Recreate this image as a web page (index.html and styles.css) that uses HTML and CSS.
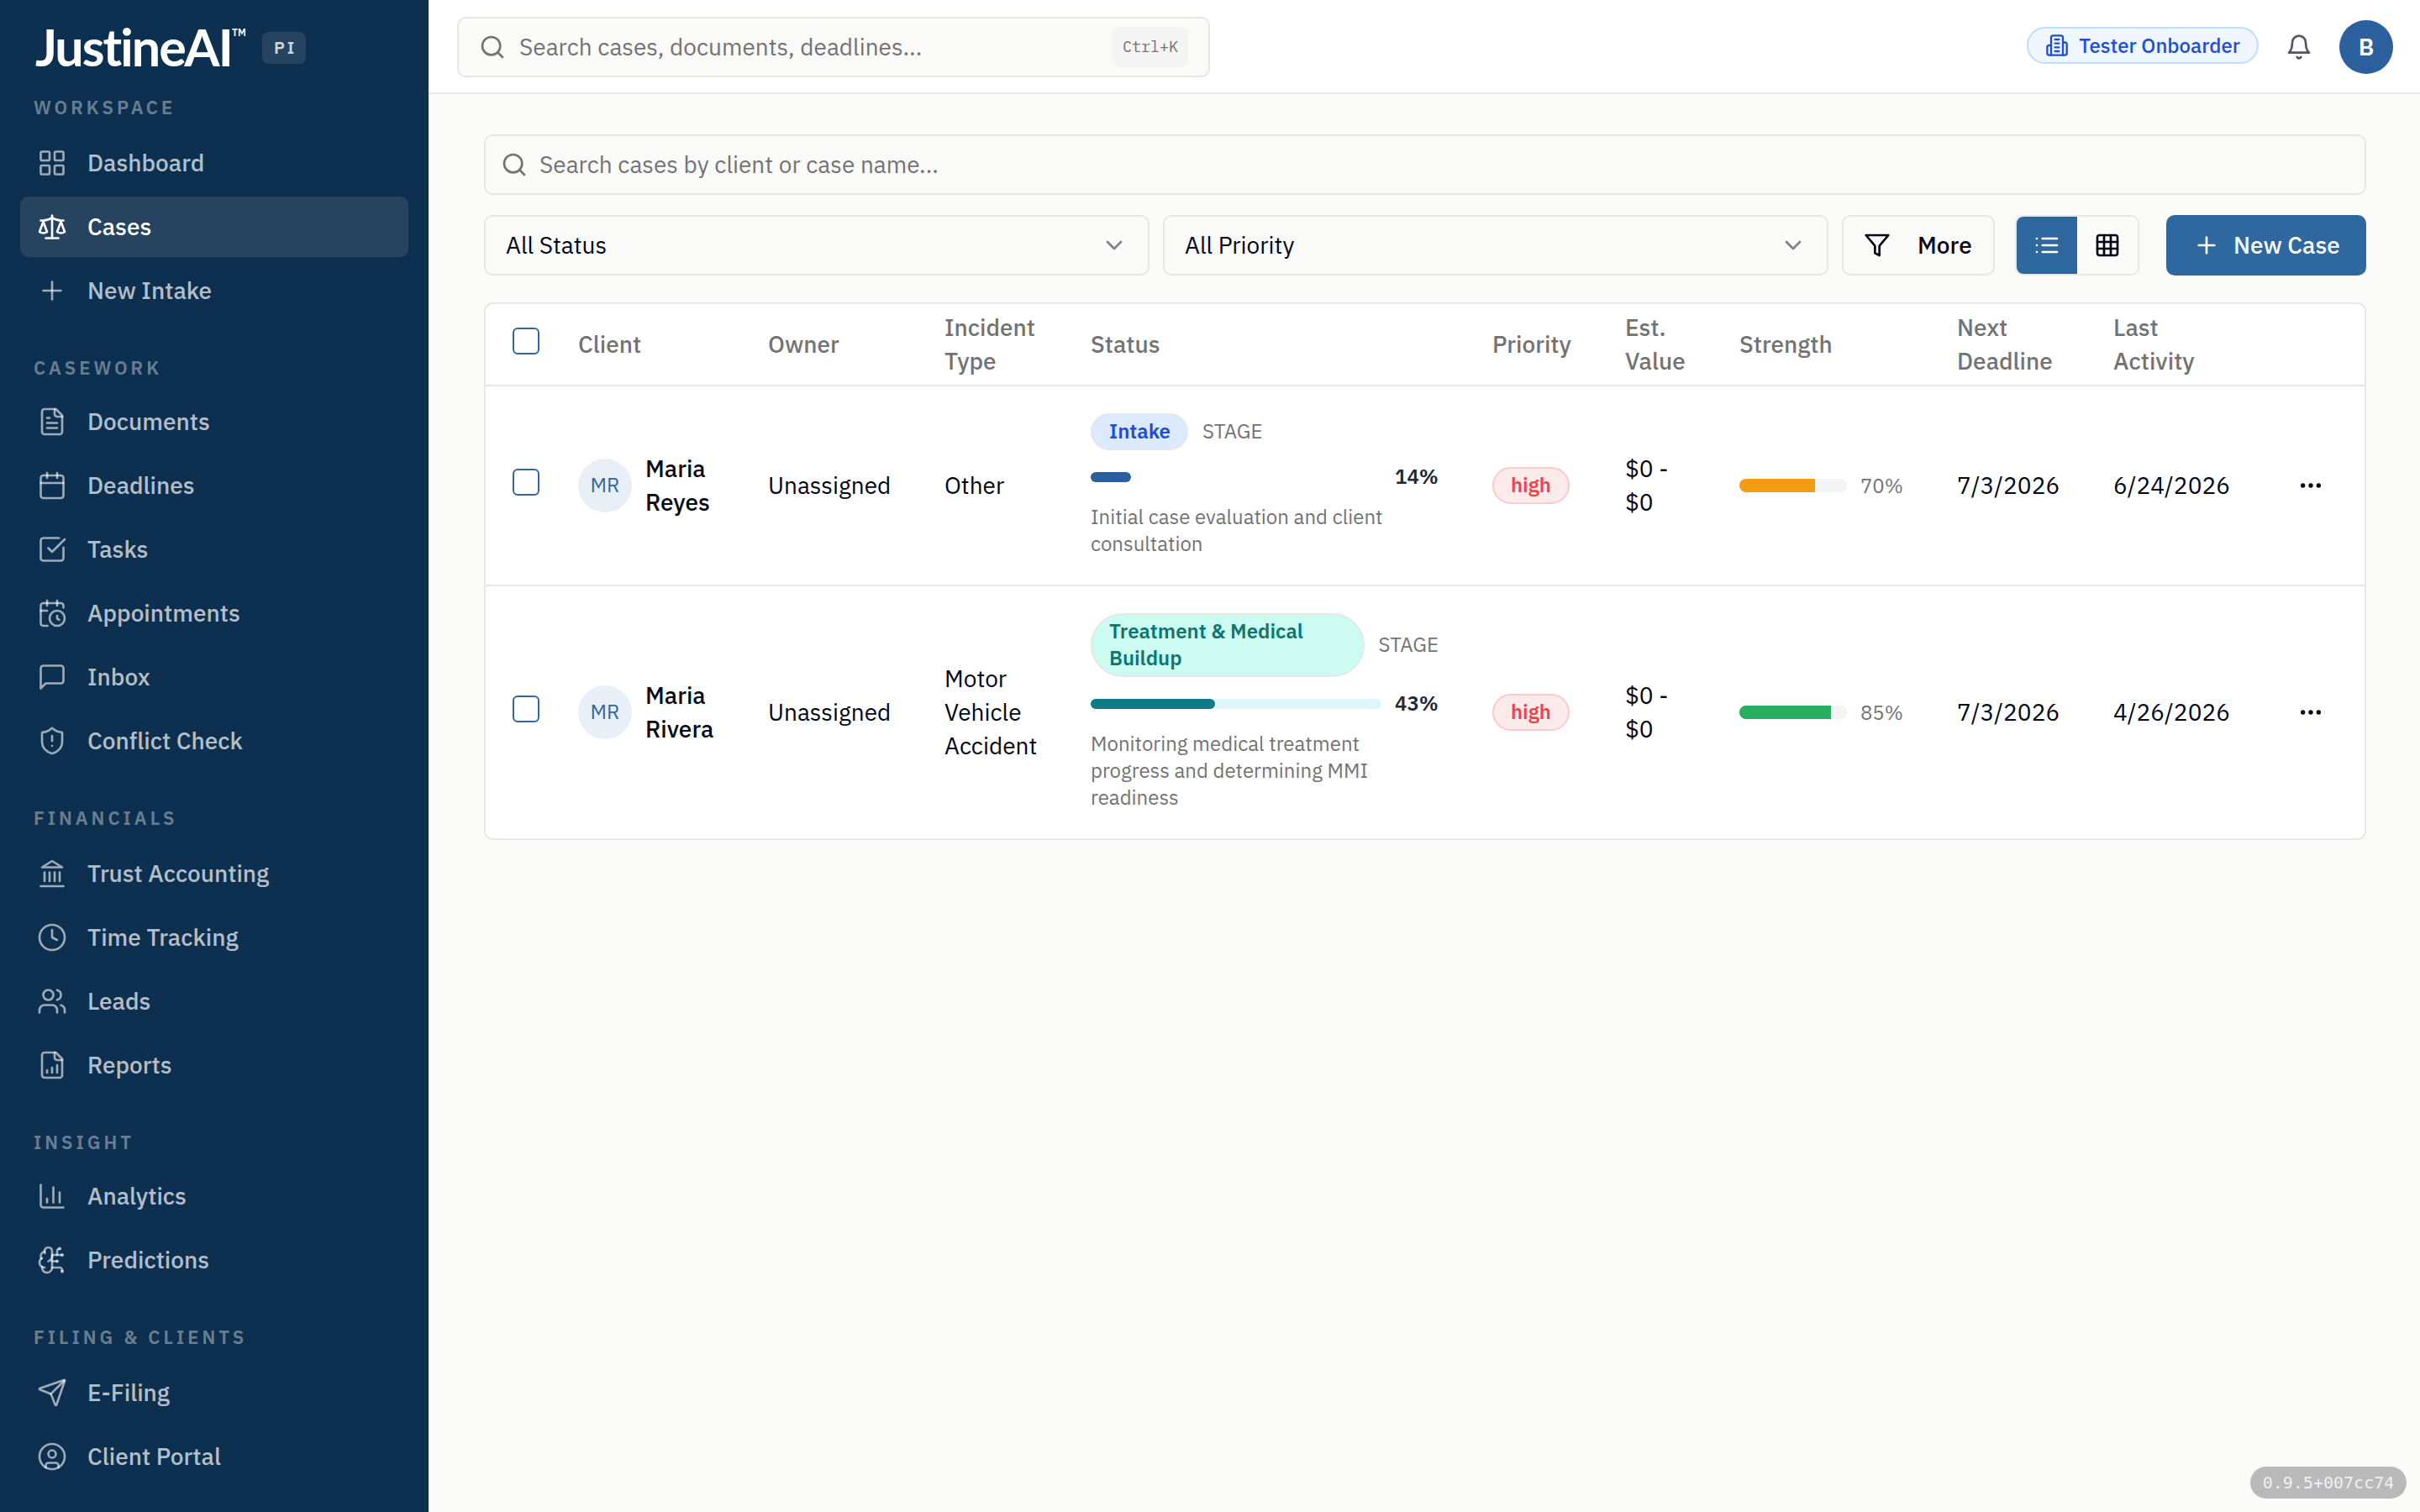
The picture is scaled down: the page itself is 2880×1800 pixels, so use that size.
FILE: index.html
```html
<!DOCTYPE html>
<html lang="en">
<head>
  <meta charset="UTF-8">
  <meta name="viewport" content="width=device-width, initial-scale=1.0">
  <title>Cases - JustineAI</title>
  <link rel="stylesheet" href="styles.css">
</head>
<body>
<svg class="sprite" xmlns="http://www.w3.org/2000/svg">
  <symbol id="i-dashboard" viewBox="0 0 24 24"><rect x="3" y="3" width="7" height="7" rx="1"/><rect x="14" y="3" width="7" height="7" rx="1"/><rect x="14" y="14" width="7" height="7" rx="1"/><rect x="3" y="14" width="7" height="7" rx="1"/></symbol>
  <symbol id="i-scale" viewBox="0 0 24 24"><path d="m16 16 3-8 3 8c-.87.65-1.92 1-3 1s-2.13-.35-3-1Z"/><path d="m2 16 3-8 3 8c-.87.65-1.92 1-3 1s-2.13-.35-3-1Z"/><path d="M7 21h10"/><path d="M12 3v18"/><path d="M3 7h2c2 0 5-1 7-2 2 1 5 2 7 2h2"/></symbol>
  <symbol id="i-plus" viewBox="0 0 24 24"><path d="M5 12h14"/><path d="M12 5v14"/></symbol>
  <symbol id="i-file" viewBox="0 0 24 24"><path d="M15 2H6a2 2 0 0 0-2 2v16a2 2 0 0 0 2 2h12a2 2 0 0 0 2-2V7Z"/><path d="M14 2v4a2 2 0 0 0 2 2h4"/><path d="M10 9H8"/><path d="M16 13H8"/><path d="M16 17H8"/></symbol>
  <symbol id="i-calendar" viewBox="0 0 24 24"><path d="M8 2v4"/><path d="M16 2v4"/><rect x="3" y="4" width="18" height="18" rx="2"/><path d="M3 10h18"/></symbol>
  <symbol id="i-check" viewBox="0 0 24 24"><path d="M21 10.5V19a2 2 0 0 1-2 2H5a2 2 0 0 1-2-2V5a2 2 0 0 1 2-2h12.5"/><path d="m9 11 3 3L22 4"/></symbol>
  <symbol id="i-calendar-clock" viewBox="0 0 24 24"><path d="M16 14v2.2l1.6 1"/><path d="M16 2v4"/><path d="M21 7.5V6a2 2 0 0 0-2-2H5a2 2 0 0 0-2 2v14a2 2 0 0 0 2 2h3.5"/><path d="M3 10h5"/><path d="M8 2v4"/><circle cx="16" cy="16" r="6"/></symbol>
  <symbol id="i-message" viewBox="0 0 24 24"><path d="M21 15a2 2 0 0 1-2 2H7l-4 4V5a2 2 0 0 1 2-2h14a2 2 0 0 1 2 2z"/></symbol>
  <symbol id="i-shield" viewBox="0 0 24 24"><path d="M20 13c0 5-3.5 7.5-7.66 8.95a1 1 0 0 1-.67-.01C7.5 20.5 4 18 4 13V6a1 1 0 0 1 1-1c2 0 4.5-1.2 6.24-2.72a1.17 1.17 0 0 1 1.52 0C14.51 3.81 17 5 19 5a1 1 0 0 1 1 1z"/><path d="M12 8v4"/><path d="M12 16h.01"/></symbol>
  <symbol id="i-landmark" viewBox="0 0 24 24"><path d="M3 22h18"/><path d="M6 18v-7"/><path d="M10 18v-7"/><path d="M14 18v-7"/><path d="M18 18v-7"/><path d="m12 2 8 5H4z"/></symbol>
  <symbol id="i-clock" viewBox="0 0 24 24"><circle cx="12" cy="12" r="10"/><path d="M12 6v6l4 2"/></symbol>
  <symbol id="i-users" viewBox="0 0 24 24"><path d="M16 21v-2a4 4 0 0 0-4-4H6a4 4 0 0 0-4 4v2"/><circle cx="9" cy="7" r="4"/><path d="M22 21v-2a4 4 0 0 0-3-3.87"/><path d="M16 3.13a4 4 0 0 1 0 7.75"/></symbol>
  <symbol id="i-report" viewBox="0 0 24 24"><path d="M15 2H6a2 2 0 0 0-2 2v16a2 2 0 0 0 2 2h12a2 2 0 0 0 2-2V7Z"/><path d="M14 2v4a2 2 0 0 0 2 2h4"/><path d="M8 18v-2"/><path d="M12 18v-4"/><path d="M16 18v-6"/></symbol>
  <symbol id="i-chart" viewBox="0 0 24 24"><path d="M3 3v16a2 2 0 0 0 2 2h16"/><path d="M18 17V9"/><path d="M13 17V5"/><path d="M8 17v-3"/></symbol>
  <symbol id="i-brain" viewBox="0 0 24 24"><path d="M12 5a3 3 0 1 0-5.997.125 4 4 0 0 0-2.526 5.77 4 4 0 0 0 .556 6.588A4 4 0 1 0 12 18Z"/><path d="M9 13a4.5 4.5 0 0 0 3-4"/><path d="M6.003 5.125A3 3 0 0 0 6.401 6.5"/><path d="M3.477 10.896a4 4 0 0 1 .585-.396"/><path d="M6 18a4 4 0 0 1-1.967-.516"/><path d="M12 13h4"/><path d="M12 18h6a2 2 0 0 1 2 2v1"/><path d="M12 8h8"/><path d="M16 8V5a2 2 0 0 1 2-2"/><circle cx="16" cy="13" r=".5"/><circle cx="18" cy="3" r=".5"/><circle cx="20" cy="21" r=".5"/><circle cx="20" cy="8" r=".5"/></symbol>
  <symbol id="i-send" viewBox="0 0 24 24"><path d="M14.536 21.686a.5.5 0 0 0 .937-.024l6.5-19a.496.496 0 0 0-.635-.635l-19 6.5a.5.5 0 0 0-.024.937l7.93 3.18a2 2 0 0 1 1.112 1.11z"/><path d="m21.854 2.147-10.94 10.939"/></symbol>
  <symbol id="i-user" viewBox="0 0 24 24"><circle cx="12" cy="12" r="10"/><circle cx="12" cy="10" r="3"/><path d="M7 20.662V19a2 2 0 0 1 2-2h6a2 2 0 0 1 2 2v1.662"/></symbol>
  <symbol id="i-search" viewBox="0 0 24 24"><circle cx="11" cy="11" r="8"/><path d="m21 21-4.3-4.3"/></symbol>
  <symbol id="i-building" viewBox="0 0 24 24"><path d="M6 22V4a2 2 0 0 1 2-2h8a2 2 0 0 1 2 2v18Z"/><path d="M6 12H4a2 2 0 0 0-2 2v6a2 2 0 0 0 2 2h2"/><path d="M18 9h2a2 2 0 0 1 2 2v9a2 2 0 0 1-2 2h-2"/><path d="M10 6h4"/><path d="M10 10h4"/><path d="M10 14h4"/><path d="M10 18h4"/></symbol>
  <symbol id="i-bell" viewBox="0 0 24 24"><path d="M6 8a6 6 0 0 1 12 0c0 7 3 9 3 9H3s3-2 3-9"/><path d="M10.3 21a1.94 1.94 0 0 0 3.4 0"/></symbol>
  <symbol id="i-chevron" viewBox="0 0 24 24"><path d="m6 9 6 6 6-6"/></symbol>
  <symbol id="i-filter" viewBox="0 0 24 24"><path d="M22 3H2l8 9.46V19l4 2v-8.54z"/></symbol>
  <symbol id="i-list" viewBox="0 0 24 24"><path d="M8 6h13"/><path d="M8 12h13"/><path d="M8 18h13"/><path d="M3 6h.01"/><path d="M3 12h.01"/><path d="M3 18h.01"/></symbol>
  <symbol id="i-grid" viewBox="0 0 24 24"><rect x="3" y="3" width="18" height="18" rx="2"/><path d="M3 9h18"/><path d="M3 15h18"/><path d="M9 3v18"/><path d="M15 3v18"/></symbol>
  <symbol id="i-dots" viewBox="0 0 24 24"><circle cx="12" cy="12" r="1"/><circle cx="19" cy="12" r="1"/><circle cx="5" cy="12" r="1"/></symbol>
</svg>

<div class="app">
  <aside class="sidebar">
    <div class="brand">
      <span class="logo">JustineAI</span>
      <span class="tm">TM</span>
      <span class="brand-tag">PI</span>
    </div>
    <nav>
      <h4 class="nav-label">WORKSPACE</h4>
      <a class="nav-item"><svg class="icon"><use href="#i-dashboard"/></svg><span>Dashboard</span></a>
      <a class="nav-item active"><svg class="icon"><use href="#i-scale"/></svg><span>Cases</span></a>
      <a class="nav-item"><svg class="icon"><use href="#i-plus"/></svg><span>New Intake</span></a>

      <h4 class="nav-label">CASEWORK</h4>
      <a class="nav-item"><svg class="icon"><use href="#i-file"/></svg><span>Documents</span></a>
      <a class="nav-item"><svg class="icon"><use href="#i-calendar"/></svg><span>Deadlines</span></a>
      <a class="nav-item"><svg class="icon"><use href="#i-check"/></svg><span>Tasks</span></a>
      <a class="nav-item"><svg class="icon"><use href="#i-calendar-clock"/></svg><span>Appointments</span></a>
      <a class="nav-item"><svg class="icon"><use href="#i-message"/></svg><span>Inbox</span></a>
      <a class="nav-item"><svg class="icon"><use href="#i-shield"/></svg><span>Conflict Check</span></a>

      <h4 class="nav-label tall">FINANCIALS</h4>
      <a class="nav-item"><svg class="icon"><use href="#i-landmark"/></svg><span>Trust Accounting</span></a>
      <a class="nav-item"><svg class="icon"><use href="#i-clock"/></svg><span>Time Tracking</span></a>
      <a class="nav-item"><svg class="icon"><use href="#i-users"/></svg><span>Leads</span></a>
      <a class="nav-item"><svg class="icon"><use href="#i-report"/></svg><span>Reports</span></a>

      <h4 class="nav-label">INSIGHT</h4>
      <a class="nav-item"><svg class="icon"><use href="#i-chart"/></svg><span>Analytics</span></a>
      <a class="nav-item"><svg class="icon"><use href="#i-brain"/></svg><span>Predictions</span></a>

      <h4 class="nav-label tall">FILING &amp; CLIENTS</h4>
      <a class="nav-item"><svg class="icon"><use href="#i-send"/></svg><span>E-Filing</span></a>
      <a class="nav-item"><svg class="icon"><use href="#i-user"/></svg><span>Client Portal</span></a>
    </nav>
  </aside>

  <div class="main">
    <header class="topbar">
      <div class="global-search">
        <svg class="icon"><use href="#i-search"/></svg>
        <span class="placeholder">Search cases, documents, deadlines...</span>
        <kbd>Ctrl+K</kbd>
      </div>
      <div class="topbar-right">
        <span class="org-pill"><svg class="icon"><use href="#i-building"/></svg><span>Tester Onboarder</span></span>
        <svg class="icon bell"><use href="#i-bell"/></svg>
        <span class="user-avatar">B</span>
      </div>
    </header>

    <div class="content">
      <div class="case-search">
        <svg class="icon"><use href="#i-search"/></svg>
        <span class="placeholder">Search cases by client or case name...</span>
      </div>

      <div class="filters">
        <div class="select"><span>All Status</span><svg class="icon"><use href="#i-chevron"/></svg></div>
        <div class="select"><span>All Priority</span><svg class="icon"><use href="#i-chevron"/></svg></div>
        <button class="btn-more"><svg class="icon"><use href="#i-filter"/></svg><span>More</span></button>
        <div class="view-toggle">
          <button class="on"><svg class="icon"><use href="#i-list"/></svg></button>
          <button><svg class="icon"><use href="#i-grid"/></svg></button>
        </div>
        <button class="btn-new"><svg class="icon"><use href="#i-plus"/></svg><span>New Case</span></button>
      </div>

      <div class="table-card">
        <table>
          <colgroup>
            <col class="c-check">
            <col class="c-client">
            <col class="c-owner">
            <col class="c-type">
            <col class="c-status">
            <col class="c-priority">
            <col class="c-value">
            <col class="c-strength">
            <col class="c-deadline">
            <col class="c-activity">
            <col class="c-actions">
          </colgroup>
          <thead>
          <tr>
            <th><span class="checkbox"></span></th>
            <th>Client</th>
            <th>Owner</th>
            <th>Incident<br>Type</th>
            <th>Status</th>
            <th>Priority</th>
            <th>Est.<br>Value</th>
            <th>Strength</th>
            <th>Next<br>Deadline</th>
            <th>Last<br>Activity</th>
            <th></th>
          </tr>
          </thead>
          <tbody>
          <tr>
            <td><span class="checkbox"></span></td>
            <td><div class="client"><span class="avatar">MR</span><span class="client-name">Maria<br>Reyes</span></div></td>
            <td>Unassigned</td>
            <td>Other</td>
            <td>
              <div class="stage-row"><span class="badge stage-intake">Intake</span><span class="stage-word">STAGE</span></div>
              <div class="progress-row"><div class="progress"><div class="progress-fill blue" style="width: 14%"></div></div><span class="percent">14%</span></div>
              <p class="stage-desc">Initial case evaluation and client<br>consultation</p>
            </td>
            <td><span class="badge priority-high">high</span></td>
            <td>$0 -<br>$0</td>
            <td><div class="strength"><div class="strength-bar"><div class="strength-fill orange" style="width: 70%"></div></div><span>70%</span></div></td>
            <td>7/3/2026</td>
            <td>6/24/2026</td>
            <td class="actions"><svg class="icon"><use href="#i-dots"/></svg></td>
          </tr>
          <tr>
            <td><span class="checkbox"></span></td>
            <td><div class="client"><span class="avatar">MR</span><span class="client-name">Maria<br>Rivera</span></div></td>
            <td>Unassigned</td>
            <td>Motor<br>Vehicle<br>Accident</td>
            <td>
              <div class="stage-row"><span class="badge stage-treatment">Treatment &amp; Medical<br>Buildup</span><span class="stage-word">STAGE</span></div>
              <div class="progress-row"><div class="progress teal-track"><div class="progress-fill teal" style="width: 42.8%"></div></div><span class="percent">43%</span></div>
              <p class="stage-desc">Monitoring medical treatment<br>progress and determining MMI<br>readiness</p>
            </td>
            <td><span class="badge priority-high">high</span></td>
            <td>$0 -<br>$0</td>
            <td><div class="strength"><div class="strength-bar"><div class="strength-fill green" style="width: 85%"></div></div><span>85%</span></div></td>
            <td>7/3/2026</td>
            <td>4/26/2026</td>
            <td class="actions"><svg class="icon"><use href="#i-dots"/></svg></td>
          </tr>
          </tbody>
        </table>
      </div>
    </div>
  </div>
</div>
<div class="version">0.9.5+007cc74</div>
</body>
</html>
```
FILE: styles.css
```css
* {
  box-sizing: border-box;
}
body {
  margin: 0;
  font-family: "IBM Plex Sans", Roboto, "Liberation Sans", sans-serif;
  font-size: 28px;
  line-height: 40px;
  color: #020617;
  background-color: #fafaf9;
}
.sprite {
  display: none;
}
.icon {
  width: 32px;
  height: 32px;
  flex-shrink: 0;
  fill: none;
  stroke: currentColor;
  stroke-width: 2;
  stroke-linecap: round;
  stroke-linejoin: round;
}
button {
  font: inherit;
  color: inherit;
  padding: 0;
  margin: 0;
  border: none;
  background: none;
}
.app {
  display: flex;
  height: 1800px;
  overflow: hidden;
}

/* sidebar */
.sidebar {
  width: 510px;
  flex-shrink: 0;
  padding: 0 24px;
  background-color: #0e3050;
  color: #fff;
}
.brand {
  display: flex;
  height: 112px;
  padding: 2px 0 0 18px;
  align-items: center;
}
.logo {
  width: 234px;
  padding-bottom: 3px;
  font-family: Lato, sans-serif;
  font-weight: 700;
  font-size: 61px;
  line-height: 60px;
  letter-spacing: -2px;
}
.tm {
  align-self: flex-start;
  width: 36px;
  padding-top: 31px;
  font-size: 12px;
  line-height: 12px;
  font-weight: 600;
}
.brand-tag {
  height: 38px;
  padding: 0 11px 0 14px;
  border-radius: 8px;
  background-color: #26445f;
  font-size: 20px;
  line-height: 38px;
  font-weight: 600;
  letter-spacing: 3px;
  color: rgba(255, 255, 255, 0.8);
}
.nav-label {
  height: 84px;
  margin: 0;
  padding: 40px 0 0 16px;
  font-size: 22px;
  line-height: 32px;
  font-weight: 600;
  letter-spacing: 4px;
  color: rgba(255, 255, 255, 0.4);
}
.nav-label.tall {
  height: 86px;
}
.nav-label:first-child {
  height: 46px;
  padding-top: 0;
}
.nav-item {
  display: flex;
  align-items: center;
  gap: 24px;
  height: 72px;
  padding: 0 20px;
  border-radius: 10px;
  font-weight: 500;
  color: rgba(255, 255, 255, 0.7);
}
.nav-item + .nav-item {
  margin-top: 4px;
}
.nav-item .icon {
  width: 36px;
  height: 36px;
  stroke-width: 1.75;
  stroke: rgba(255, 255, 255, 0.6);
}
.nav-item.active {
  background-color: #26445f;
  color: #fff;
}
.nav-item.active .icon {
  stroke: #fff;
}

/* top bar */
.main {
  flex: 1;
}
.topbar {
  display: flex;
  align-items: center;
  justify-content: space-between;
  height: 112px;
  padding: 2px 32px 0 34px;
  border-bottom: 2px solid #e7e7e6;
  background-color: #fff;
}
.global-search, .case-search {
  display: flex;
  align-items: center;
  gap: 16px;
  height: 72px;
  border: 2px solid #e7e7e6;
  border-radius: 10px;
  background-color: #fafaf9;
  color: #737373;
}
.global-search {
  width: 896px;
  padding: 0 24px;
}
.placeholder {
  flex: 1;
}
kbd {
  width: 90px;
  height: 48px;
  border-radius: 8px;
  background-color: #f4f4f5;
  font-family: "IBM Plex Mono", "Liberation Mono", monospace;
  font-size: 18.4px;
  line-height: 46px;
  text-align: center;
}
.topbar-right {
  display: flex;
  align-items: center;
}
.org-pill {
  display: flex;
  align-items: center;
  gap: 12px;
  height: 44px;
  padding: 0 20px;
  margin-bottom: 4px;
  border: 2px solid #bfdbfe;
  border-radius: 22px;
  background-color: #eff6ff;
  color: #1d4ed8;
  font-size: 24px;
  line-height: 38px;
  font-weight: 500;
}
.org-pill span {
  padding-bottom: 1px;
}
.org-pill .icon {
  width: 28px;
  height: 28px;
}
.bell {
  margin: 0 32px;
  color: #525660;
}
.user-avatar {
  width: 64px;
  height: 64px;
  border-radius: 50%;
  background-color: #2c5f9e;
  color: #fff;
  font-weight: 600;
  line-height: 64px;
  text-align: center;
}

/* cases page */
.content {
  padding: 48px 64px 0 66px;
}
.case-search {
  padding: 0 18px;
  gap: 14px;
}
.filters {
  display: flex;
  margin-top: 24px;
  height: 72px;
}
.select {
  display: flex;
  flex: 1;
  align-items: center;
  justify-content: space-between;
  margin-right: 16px;
  padding: 0 24px;
  border: 2px solid #e7e7e6;
  border-radius: 10px;
}
.select .icon {
  color: #7f8187;
}
.btn-more {
  display: flex;
  align-items: center;
  gap: 32px;
  width: 182px;
  padding-left: 24px;
  border: 2px solid #e7e7e6;
  border-radius: 10px;
  font-weight: 500;
}
.view-toggle {
  display: flex;
  width: 148px;
  margin: 0 32px 0 24px;
  border: 2px solid #e7e7e6;
  border-radius: 10px;
  overflow: hidden;
}
.view-toggle button {
  display: flex;
  flex: 1;
  align-items: center;
  justify-content: center;
}
.view-toggle .on {
  background-color: #2f689f;
  color: #fff;
}
.btn-new {
  display: flex;
  align-items: center;
  gap: 16px;
  width: 238px;
  padding-left: 32px;
  border-radius: 10px;
  background-color: #2f689f;
  color: #fff;
  font-weight: 500;
}

/* table */
.table-card {
  margin-top: 32px;
  border: 2px solid #e7e7e6;
  border-radius: 10px;
  background-color: #fff;
  overflow: hidden;
}
table {
  width: 100%;
  table-layout: fixed;
  border-spacing: 0;
}
th, td {
  padding: 0 32px;
  text-align: left;
  vertical-align: middle;
  white-space: nowrap;
}
th {
  height: 98px;
  border-bottom: 2px solid #e7e7e6;
  font-weight: 500;
  color: #737373;
}
td {
  padding-top: 32px;
  padding-bottom: 32px;
}
tbody tr:first-child td {
  border-bottom: 2px solid #e7e7e6;
}
.c-check { width: 78px; }
.c-client { width: 226px; }
.c-owner { width: 210px; }
.c-type { width: 174px; }
.c-status { width: 478px; }
.c-priority { width: 158px; }
.c-value { width: 136px; }
.c-strength { width: 259px; }
.c-deadline { width: 186px; }
.c-activity { width: 203px; }
.c-actions { width: 128px; }
.checkbox {
  display: block;
  width: 32px;
  height: 32px;
  margin-bottom: 8px;
  border: 2px solid #2f689f;
  border-radius: 6px;
}
.client {
  display: flex;
  align-items: center;
  gap: 16px;
}
.avatar {
  width: 64px;
  height: 64px;
  border-radius: 50%;
  background-color: #e9eff6;
  color: #2f689f;
  font-size: 24px;
  line-height: 63px;
  text-align: center;
}
.client-name {
  font-weight: 500;
}
.badge {
  display: inline-block;
  padding: 3px 20px 5px;
  border: 2px solid #e5e7eb;
  border-radius: 38px;
  font-size: 24px;
  line-height: 32px;
  font-weight: 600;
}
.stage-intake {
  width: 116px;
  margin-right: 1px;
  background-color: #dbeafe;
  color: #1d4ed8;
}
.stage-treatment {
  flex: 1;
  margin-right: 1px;
  background-color: #ccfbf1;
  color: #0f766e;
}
.priority-high {
  display: block;
  width: 92px;
  border-color: #fcc9c9;
  background-color: #fdebeb;
  color: #ef4444;
}
.stage-row {
  display: flex;
  align-items: center;
  gap: 16px;
}
.stage-word, .percent {
  padding-bottom: 2px;
  font-size: 24px;
  line-height: 30px;
}
.stage-word {
  color: #737373;
}
.stage-desc, .strength {
  font-size: 24px;
  line-height: 32px;
  color: #737373;
}
.progress-row {
  display: flex;
  align-items: center;
  gap: 16px;
  margin: 16px 0;
}
.progress {
  width: 346px;
  height: 12px;
  border-radius: 6px;
}
.teal-track {
  background-color: #def6f9;
}
.progress-fill {
  height: 12px;
  border-radius: 6px;
}
.blue { background-color: #2c5f9e; }
.teal { background-color: #0d7c86; }
.orange { background-color: #f39c12; }
.green { background-color: #27ae60; }
.percent {
  font-weight: 600;
  color: #1f2937;
}
.stage-desc {
  margin: -1px 0 1px;
}
.strength {
  display: flex;
  align-items: center;
  gap: 16px;
}
.strength-bar {
  width: 128px;
  height: 16px;
  border-radius: 8px;
  background-color: #f4f4f4;
  overflow: hidden;
}
.strength-fill {
  height: 16px;
}
.actions .icon {
  display: block;
  margin-left: 16px;
}
td.actions {
  padding-right: 0;
}
.version {
  position: absolute;
  right: 16px;
  bottom: 16px;
  width: 186px;
  height: 38px;
  border-radius: 19px;
  background-color: #b9b9b9;
  color: #f0f0f0;
  font-family: "DejaVu Sans Mono", monospace;
  font-size: 20px;
  line-height: 38px;
  text-align: center;
}
```
